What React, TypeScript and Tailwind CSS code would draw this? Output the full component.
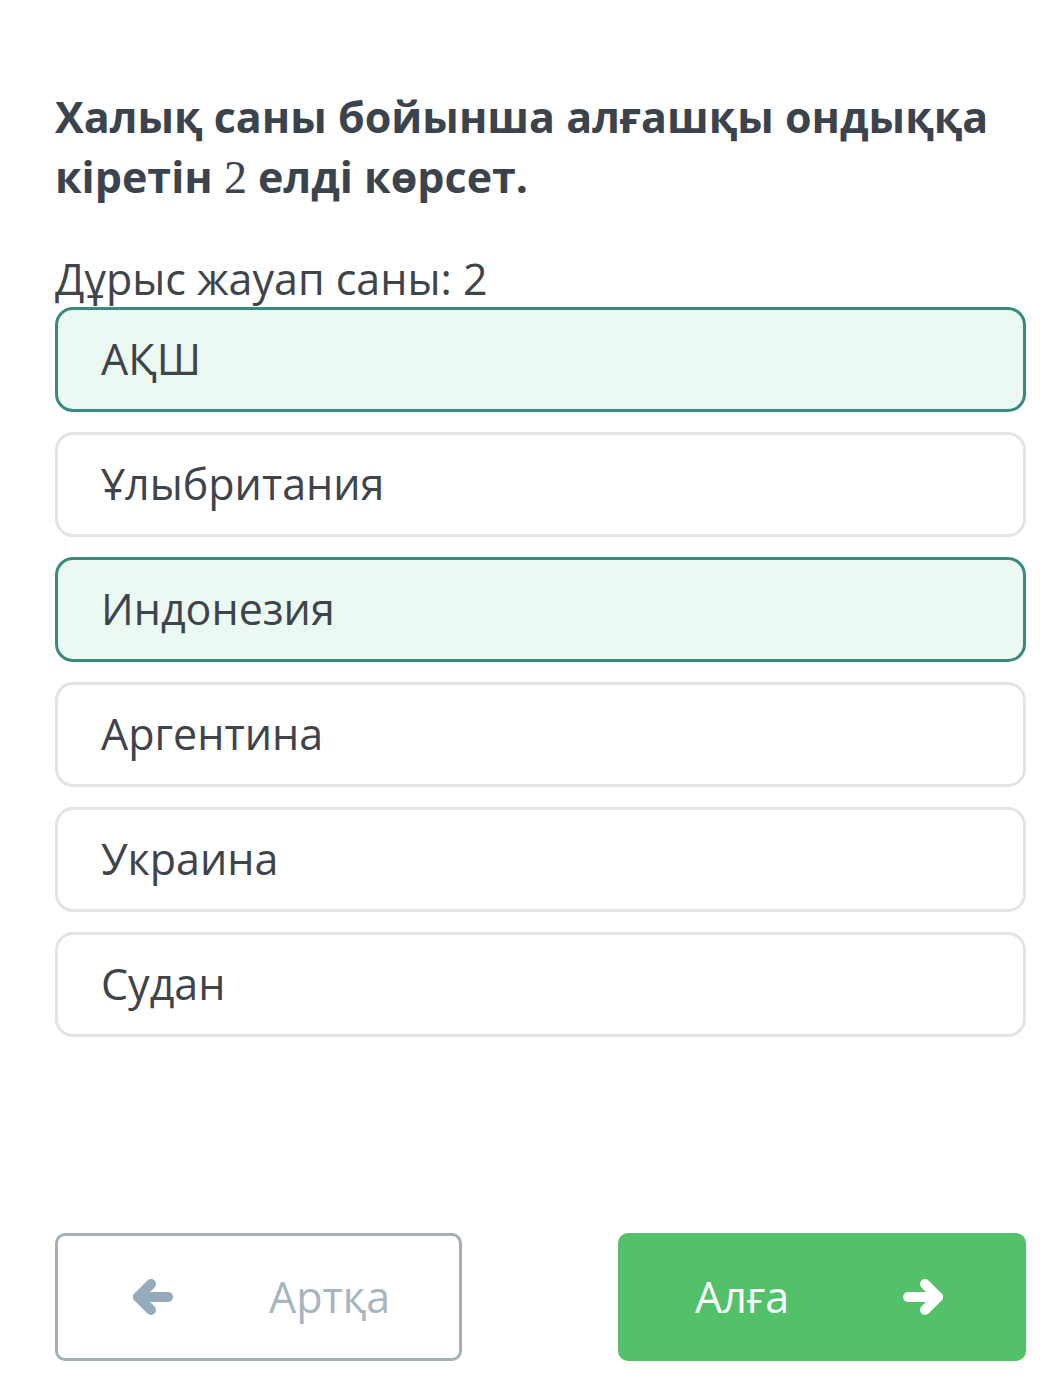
import React, { useState } from 'react';

const options = ['АҚШ', 'Ұлыбритания', 'Индонезия', 'Аргентина', 'Украина', 'Судан'];

function Arrow({ dir, className }: { dir: 'left' | 'right'; className?: string }) {
  return (
    <svg viewBox="0 0 44 38" className={className} fill="none" stroke="currentColor" strokeWidth="10" strokeLinecap="round" strokeLinejoin="round">
      {dir === 'left' ? (
        <>
          <path d="M8 19H38" />
          <path d="M21 6L8 19L21 32" />
        </>
      ) : (
        <>
          <path d="M6 19H36" />
          <path d="M23 6L36 19L23 32" />
        </>
      )}
    </svg>
  );
}

export default function App() {
  const [selected, setSelected] = useState<number[]>([0, 2]);

  const toggle = (i: number) => {
    setSelected((s) => (s.includes(i) ? s.filter((x) => x !== i) : [...s, i]));
  };

  return (
    <div className="w-[1057px] h-[1398px] bg-white font-['Open_Sans',sans-serif] flex flex-col">
      <div className="ml-[55px] w-[971px] pt-[87px] flex flex-col flex-1">
        <h1 className="text-[43px] leading-[60px] font-bold text-[#3b434c]">
          Халық саны бойынша алғашқы ондыққа кіретін{' '}
          <span className="font-['Liberation_Serif',serif] font-normal text-[46px]">2</span> елді көрсет.
        </h1>
        <p className="mt-[43px] text-[43px] leading-[56px] text-[#3e444a]">Дұрыс жауап саны: 2</p>

        <div className="flex flex-col gap-[20px]">
          {options.map((o, i) => {
            const on = selected.includes(i);
            return (
              <button
                key={o}
                onClick={() => toggle(i)}
                className={
                  'h-[105px] w-full rounded-[18px] border-[3px] pl-[43px] text-left text-[43px] text-[#3e444a] ' +
                  (on ? 'border-[#3b8a7f] bg-[#ecf9f3]' : 'border-[#e3e4e4] bg-white')
                }
              >
                {o}
              </button>
            );
          })}
        </div>

        <div className="mt-auto mb-[37px] flex justify-between">
          <button className="h-[128px] w-[407px] rounded-[10px] border-[3px] border-[#a4b0b8] bg-white flex items-center pl-[72px] text-[#a7b5bf]">
            <Arrow dir="left" className="w-[44px] h-[38px] text-[#93abbc]" />
            <span className="ml-[95px] text-[43px]">Артқа</span>
          </button>
          <button className="h-[128px] w-[408px] rounded-[10px] bg-[#52c16a] flex items-center pl-[77px] text-white">
            <span className="text-[43px]">Алға</span>
            <Arrow dir="right" className="ml-[113px] w-[44px] h-[38px]" />
          </button>
        </div>
      </div>
    </div>
  );
}
